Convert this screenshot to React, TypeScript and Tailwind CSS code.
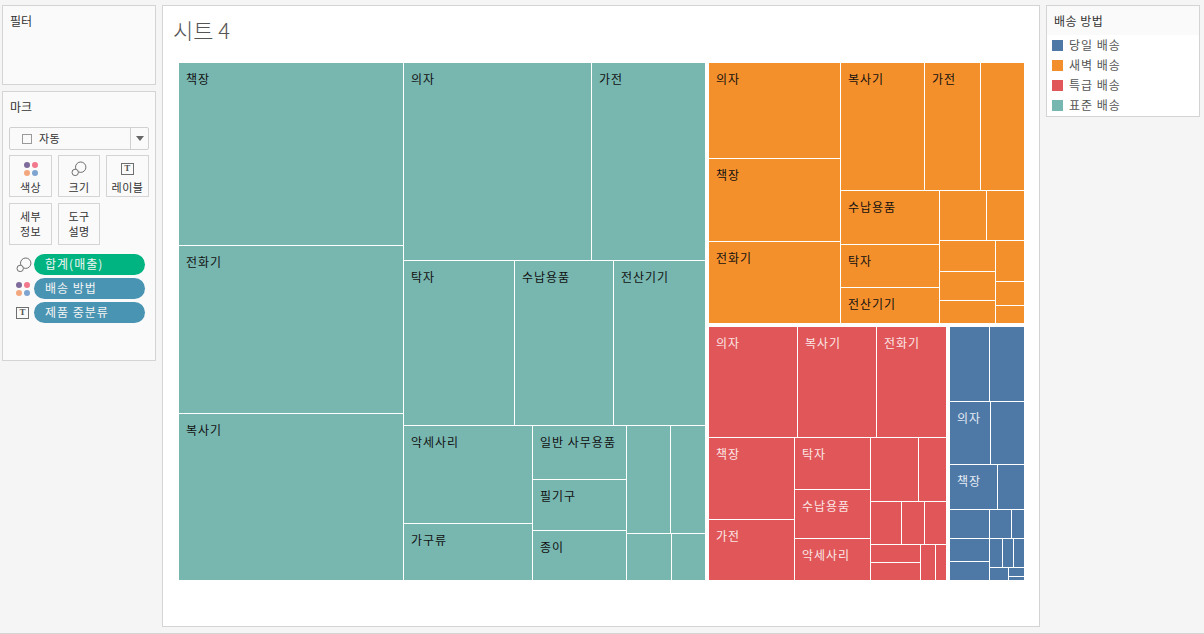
const KR = "font-['Noto_Sans_CJK_KR','Noto_Sans',sans-serif]";

type Node = { size: number; label?: string; dir?: 'row' | 'col'; kids?: Node[] };

const L = (size: number, label?: string): Node => ({ size, label });
const R = (size: number, ...kids: Node[]): Node => ({ size, dir: 'row', kids });
const C = (size: number, ...kids: Node[]): Node => ({ size, dir: 'col', kids });

// sizes in px taken from the treemap, 1px white rule between the cells
const teal = R(526,
    C(224, L(182, '책장'), L(167, '전화기'), L(166, '복사기')),
    C(301,
        C(362,
            R(197, L(187, '의자'), L(113, '가전')),
            R(164, L(110, '탁자'), L(98, '수납용품'), L(91, '전산기기')),
        ),
        R(154,
            C(128, L(97, '악세사리'), L(56, '가구류')),
            C(93, L(53, '일반 사무용품'), L(50, '필기구'), L(49, '종이')),
            C(78,
                R(107, L(43), L(34)),
                R(46, L(44), L(33)),
            ),
        ),
    ),
);

const orange = R(260,
    C(131, L(95, '의자'), L(82, '책장'), L(81, '전화기')),
    C(183,
        R(127, L(83, '복사기'), L(55, '가전'), L(43)),
        R(132,
            C(98, L(53, '수납용품'), L(42, '탁자'), L(35, '전산기기')),
            C(84,
                R(49, L(46), L(37)),
                R(82,
                    C(55, L(30), L(28), L(22)),
                    C(28, L(40), L(23), L(17)),
                ),
            ),
        ),
    ),
);

const red = C(237,
    R(110, L(88, '의자'), L(78, '복사기'), L(69, '전화기')),
    R(142,
        C(85, L(81, '책장'), L(60, '가전')),
        C(75, L(51, '탁자'), L(48, '수납용품'), L(41, '악세사리')),
        C(75,
            R(63, L(47), L(27)),
            R(42, L(30), L(22), L(21)),
            R(35,
                C(49, L(17), L(17)),
                L(14),
                L(10),
            ),
        ),
    ),
);

const blue = C(74,
    R(74, L(39), L(34)),
    R(62, L(40, '의자'), L(33)),
    R(44, L(47, '책장'), L(26)),
    R(28, L(39), L(21), L(12)),
    R(41,
        C(39, L(22), L(18)),
        C(34,
            R(28, L(12), L(10), L(10)),
            R(12, L(18), C(15, L(8), L(3))),
        ),
    ),
);

function Cell({ node, parentDir, bg, text }: { node: Node; parentDir: 'row' | 'col'; bg: string; text: string }) {
    const sizeStyle = parentDir === 'row' ? { width: node.size } : { height: node.size };
    if (node.kids) {
        return (
            <div className={`flex shrink-0 gap-px ${node.dir === 'row' ? 'flex-row' : 'flex-col'} ${parentDir === 'row' ? 'self-stretch' : ''}`} style={sizeStyle}>
                {node.kids.map((k, i) => (
                    <Cell key={i} node={k} parentDir={node.dir!} bg={bg} text={text} />
                ))}
            </div>
        );
    }
    if (!node.label) {
        return <div className={`shrink-0 ${bg}`} style={sizeStyle} />;
    }
    return (
        <div className={`shrink-0 overflow-hidden pl-[7px] pt-[7px] text-[12px] leading-[18px] tracking-[1px] whitespace-nowrap ${bg} ${text}`} style={sizeStyle}>
            {node.label}
        </div>
    );
}

function SizeIcon() {
    return (
        <svg width="16" height="16" viewBox="0 0 16 16" fill="none" stroke="#6f6f6f" strokeWidth="1">
            <circle cx="9.7" cy="6.2" r="5.2" />
            <circle cx="4.2" cy="11.4" r="3.2" fill="#fafafa" />
        </svg>
    );
}

function ColorIcon() {
    return (
        <div className="grid grid-cols-2 gap-x-[2px] gap-y-[2px] w-[14px]">
            <span className="w-[6px] h-[6px] rounded-full bg-[#7f6b9b]" />
            <span className="w-[6px] h-[6px] rounded-full bg-[#f2788c]" />
            <span className="w-[6px] h-[6px] rounded-full bg-[#f3a77f]" />
            <span className="w-[6px] h-[6px] rounded-full bg-[#7fa4cf]" />
        </div>
    );
}

function LabelIcon() {
    return (
        <div className="w-[13px] h-[12px] border border-[#6f6f6f] flex items-center justify-center text-[9px] leading-none font-bold text-[#555] font-['Liberation_Serif',serif]">
            T
        </div>
    );
}

function MarkButton({ icon, wide, children }: { icon?: React.ReactNode; wide?: boolean; children: React.ReactNode }) {
    return (
        <div className={`${wide ? 'w-[43px]' : 'w-[42px]'} h-[42px] border border-[#d4d4d4] flex flex-col items-center text-[11px] leading-[15px] tracking-[0.5px] text-[#333] text-center ${icon ? 'justify-start pt-[4px]' : 'justify-center'}`}>
            {icon && <div className="h-[17px] mb-[3px] flex items-center justify-center">{icon}</div>}
            {children}
        </div>
    );
}

function Pill({ icon, color, children }: { icon: React.ReactNode; color: string; children: React.ReactNode }) {
    return (
        <div className="flex items-center h-[21px]">
            <div className="w-[16px] ml-[13px] mr-[2px] flex justify-start">{icon}</div>
            <div className={`w-[111px] h-[21px] rounded-full pl-[11px] text-[12px] leading-[19px] tracking-[1px] text-[#f4f4f4] ${color}`}>{children}</div>
        </div>
    );
}

const legend = [
    { name: '당일 배송', color: 'bg-[#4e79a7]' },
    { name: '새벽 배송', color: 'bg-[#f28e2b]' },
    { name: '특급 배송', color: 'bg-[#e15759]' },
    { name: '표준 배송', color: 'bg-[#76b7b2]' },
];

export default function App() {
    return (
        <div className={`w-[1204px] h-[634px] overflow-hidden bg-[#f5f5f5] border-b border-[#d4d4d4] flex pt-[5px] ${KR}`}>
            {/* Left shelves */}
            <div className="w-[154px] ml-[2px] flex flex-col gap-[6px]">
                <div className="h-[80px] border border-[#d4d4d4] bg-[#fafafa] pl-[7px] pt-[6px] text-[12px] leading-[18px] text-[#333]">필터</div>
                <div className="h-[270px] border border-[#d4d4d4] bg-[#fafafa] px-[6px] pt-[6px] text-[#333]">
                    <div className="text-[12px] leading-[18px] pl-px">마크</div>
                    <div className="mt-[11px] h-[23px] border border-[#d0d0d0] rounded-[2px] flex items-center text-[11px] tracking-[0.5px]">
                        <div className="flex-1 flex items-center pl-[12px] gap-[7px]">
                            <span className="w-[10px] h-[10px] border border-[#9a9a9a]" />
                            자동
                        </div>
                        <div className="w-[18px] h-full border-l border-[#d0d0d0] flex items-center justify-center">
                            <span className="w-0 h-0 border-x-[4px] border-x-transparent border-t-[5px] border-t-[#666]" />
                        </div>
                    </div>
                    <div className="mt-[5px] flex gap-[6px]">
                        <MarkButton wide icon={<ColorIcon />}>색상</MarkButton>
                        <MarkButton icon={<SizeIcon />}>크기</MarkButton>
                        <MarkButton wide icon={<LabelIcon />}>레이블</MarkButton>
                    </div>
                    <div className="mt-[6px] flex gap-[6px]">
                        <MarkButton wide>세부<br />정보</MarkButton>
                        <MarkButton>도구<br />설명</MarkButton>
                    </div>
                    <div className="mt-[9px] -mx-[6px] flex flex-col gap-[3px]">
                        <Pill icon={<SizeIcon />} color="bg-[#00b482]">합계(매출)</Pill>
                        <Pill icon={<ColorIcon />} color="bg-[#4a94b3]">배송 방법</Pill>
                        <Pill icon={<LabelIcon />} color="bg-[#4a94b3]">제품 중분류</Pill>
                    </div>
                </div>
            </div>

            {/* Sheet */}
            <div className="ml-[6px] w-[878px] h-[622px] bg-white border border-[#d4d4d4] pl-[10px] pt-[8px]">
                <div className="text-[22px] leading-[30px] font-light text-[#555]">시트 4</div>
                <div className="mt-[19px] ml-[6px] flex gap-1 h-[517px] w-[845px]">
                    <Cell node={teal} parentDir="row" bg="bg-[#78b6b0]" text="text-[#111]" />
                    <div className="flex flex-col gap-1 w-[315px]">
                        <div className="flex h-[260px]">
                            <Cell node={{ ...orange, size: 315 }} parentDir="row" bg="bg-[#f4902c]" text="text-[#111]" />
                        </div>
                        <div className="flex gap-1 h-[253px]">
                            <Cell node={red} parentDir="row" bg="bg-[#e15759]" text="text-[#fbe6e6]" />
                            <Cell node={blue} parentDir="row" bg="bg-[#4e79a7]" text="text-[#e6edf5]" />
                        </div>
                    </div>
                </div>
            </div>

            {/* Legend */}
            <div className="ml-[6px] w-[154px] h-[112px] border border-[#d4d4d4] bg-white">
                <div className="h-[29px] bg-[#fafafa] pl-[7px] text-[12px] leading-[29px] tracking-[0.5px] text-[#333]">배송 방법</div>
                <div className="flex flex-col">
                    {legend.map((item) => (
                        <div key={item.name} className="h-[20px] flex items-center pl-[5px] gap-[6px] text-[12px] tracking-[1px] text-[#555]">
                            <span className={`w-[11px] h-[11px] ${item.color}`} />
                            {item.name}
                        </div>
                    ))}
                </div>
            </div>
        </div>
    );
}
